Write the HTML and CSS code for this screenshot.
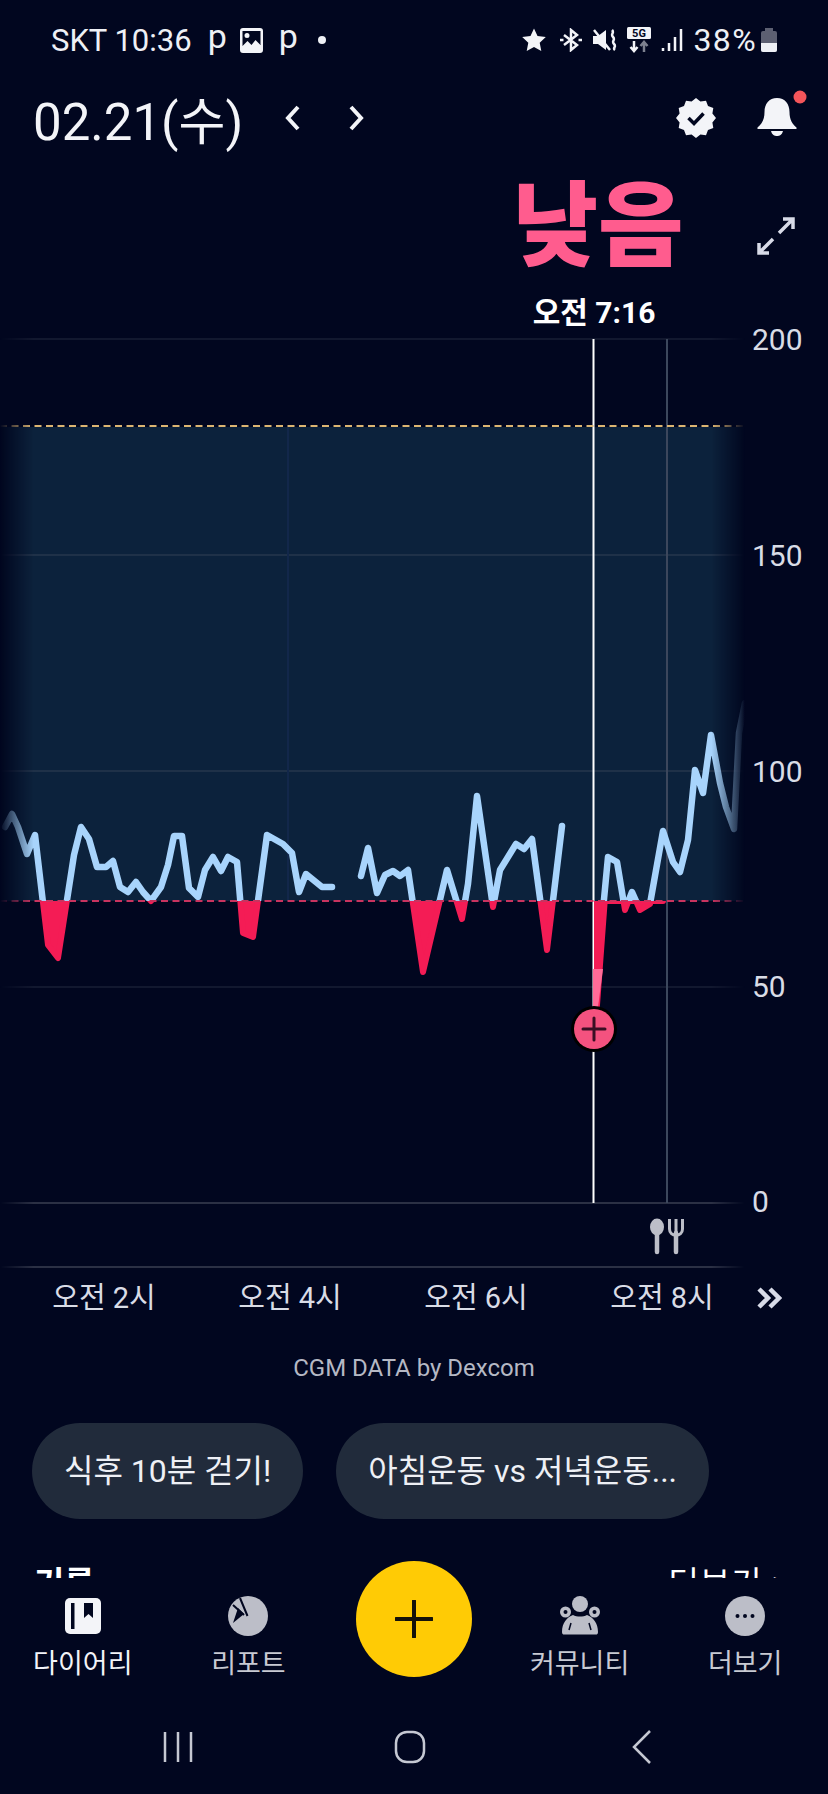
FILE: index.html
```html
<!DOCTYPE html>
<html lang="ko">
<head>
<meta charset="UTF-8">
<meta name="viewport" content="width=device-width, initial-scale=1.0">
<title>Diary</title>
<link rel="stylesheet" href="styles.css">
</head>
<body>
<div class="page">
  <div class="content">
    <div class="status-bar">
      <div class="status-left">
        <span class="carrier">SKT 10:36</span>
        <span class="status-p">p</span>
        <svg class="status-img" viewBox="0 0 23 25"><path class="ico-light" fill-rule="evenodd" d="M3 0h17a3 3 0 0 1 3 3v19a3 3 0 0 1-3 3H3a3 3 0 0 1-3-3V3a3 3 0 0 1 3-3zM2.500 3v15l5-5 4 4 4-5 5 5V3zM7 5a2.500 2.500 0 1 1 0 5 2.500 2.500 0 0 1 0-5z"/></svg>
        <span class="status-p">p</span>
        <span class="status-dot"></span>
      </div>
      <div class="status-right">
        <svg class="ico-24 star" viewBox="0 0 24 24"><path class="ico-light" d="M12 .5l3.500 7.600 8.300 1-6.100 5.700 1.600 8.200L12 18.900 4.700 23l1.600-8.200L.2 9.100l8.300-1z"/></svg>
        <svg class="ico-24" viewBox="0 0 24 24"><path class="ico-line" d="M5 7l13 10-6 5V2l6 5L5 17M1 12h3.500M19.500 12H23"/></svg>
        <svg class="ico-24" viewBox="0 0 24 24"><path class="ico-light" d="M0 8h5l8-6v20l-8-6H0z"/><path class="ico-line" d="M1 2l16 20M19 2c3 3-2 4 1 7s-2 4 1 7-2 4 1 6"/></svg>
        <svg class="ico-5g" viewBox="0 0 24 26"><rect class="ico-light" width="24" height="12" rx="1.500"/><text class="ico-5g-text" x="12" y="10">5G</text><path class="ico-line" d="M7 14v10M3.500 20L7 24l3.500-4"/><path class="ico-line dim" d="M17 25V15M13.500 19L17 15l3.500 4"/></svg>
        <svg class="ico-sig" viewBox="0 0 22 24"><path class="ico-line" d="M2 20v3M8 15v8M14 9v14M20 1v22"/></svg>
        <span class="battery-text">38%</span>
        <div class="battery"><div class="battery-fill"></div></div>
      </div>
    </div>

    <div class="date-bar">
      <h1 class="date-title">02.21(수)</h1>
      <svg class="date-arrow" viewBox="0 0 16 26"><path d="M13 2L3 13l10 11"/></svg>
      <svg class="date-arrow next" viewBox="0 0 16 26"><path d="M3 2l10 11L3 24"/></svg>
      <div class="date-actions">
        <svg class="ico-badge" viewBox="0 0 40 40"><polygon class="ico-light" points="40,20 36.400,24.400 37.300,30 32,32 30,37.300 24.400,36.400 20,40 15.600,36.400 10,37.300 8,32 2.700,30 3.600,24.400 0,20 3.600,15.600 2.700,10 8,8 10,2.700 15.600,3.600 20,0 24.400,3.600 30,2.700 32,8 37.300,10 36.400,15.600"/><path class="badge-check" d="M12.500 20l5.500 5.500 9.500-10"/></svg>
        <svg class="ico-bell" viewBox="0 0 52 46"><path class="ico-light" d="M20 5c-8 0-12.500 6-12.500 14 0 8-3 12-7 15.500V36h39v-1.500c-4-3.500-7-7.500-7-15.500 0-8-4.500-14-12.500-14z"/><path class="ico-light" d="M14 38h12c-1 4-3.500 5-6 5s-5-1-6-5z"/><circle class="bell-dot" cx="43" cy="4" r="6.500"/></svg>
      </div>
    </div>

    <div class="reading">
      <div class="reading-level">낮음</div>
      <div class="reading-time">오전 7:16</div>
      <svg class="ico-expand" viewBox="0 0 38 38"><path d="M36 2L22 16M26 2h10v10M2 36l14-14M2 26v10h10"/></svg>
    </div>

    <svg class="chart" viewBox="0 330 828 940">
      <defs>
        <linearGradient id="edgeFade" gradientUnits="userSpaceOnUse" x1="0" y1="0" x2="745" y2="0">
          <stop offset="0" stop-color="#000"/>
          <stop offset="0.045" stop-color="#fff"/>
          <stop offset="0.955" stop-color="#fff"/>
          <stop offset="1" stop-color="#000"/>
        </linearGradient>
        <mask id="edgeMask" maskUnits="userSpaceOnUse" x="0" y="330" width="828" height="940">
          <rect x="0" y="330" width="828" height="940" fill="url(#edgeFade)"/>
        </mask>
        <clipPath id="aboveLow"><rect x="0" y="330" width="828" height="571"/></clipPath>
        <clipPath id="belowLow"><rect x="0" y="901" width="828" height="300"/></clipPath>
        <path id="seg1" d="M5 827L12 814L18 827L27 854L35 835L48 945L58 958L74 855L81 827L89 839L97 867L106 867L113 861L120 887L128 892L136 882L143 892L151 901L161 887L168 865L174 836L182 836L189 888L198 897L205 870L213 857L221 871L228 857L237 862L243 933L253 937L267 835L283 844L292 853L299 892L306 874L322 887L332 887"/>
        <path id="seg2" d="M361 876L368 848L377 893L385 875L393 871L400 876L408 870L423 972L447 870L462 919L468 884L477 796L493 907L500 870L516 844L524 849L532 839L547 950L562 826"/>
        <path id="seg3" d="M594 1005L608 857L617 862L625 910L632 892L640 910L650 904L663 831L673 862L680 872L688 840L695 770L703 793L711 735L720 783L726 807L734 829L739 733L745 703"/>
      </defs>

      <g mask="url(#edgeMask)">
        <rect class="band" x="0" y="427" width="745" height="474"/>
        <line class="grid dim" x1="0" y1="339" x2="745" y2="339"/>
        <line class="grid" x1="0" y1="555" x2="745" y2="555"/>
        <line class="grid" x1="0" y1="771" x2="745" y2="771"/>
        <line class="grid dim" x1="0" y1="987" x2="745" y2="987"/>
        <line class="grid strong" x1="0" y1="1203" x2="745" y2="1203"/>
        <line class="grid strong" x1="0" y1="1267" x2="745" y2="1267"/>
      </g>
      <line class="grid-v faint" x1="288" y1="427" x2="288" y2="901"/>
      <line class="grid-v" x1="667" y1="339" x2="667" y2="1203"/>
      <line class="cursor" x1="593.500" y1="339" x2="593.500" y2="1203"/>

      <g clip-path="url(#belowLow)" class="low">
        <use href="#seg1"/><use href="#seg2"/>
        <path d="M597 1005L608 857L617 862L625 910L632 892L640 910L650 904L663 831L663 901L597 901Z"/>
      </g>
      <path class="urgent" d="M593 969H603L598 1007H593Z"/>
      <g mask="url(#edgeMask)">
        <g clip-path="url(#aboveLow)" class="glucose">
          <use href="#seg1"/><use href="#seg2"/><use href="#seg3"/>
        </g>
        <line class="limit-high" x1="0" y1="426" x2="745" y2="426"/>
        <line class="limit-low" x1="0" y1="901" x2="745" y2="901"/>
      </g>

      <circle class="marker-ring" cx="594" cy="1029" r="23"/>
      <circle class="marker" cx="594" cy="1029" r="20"/>
      <path class="marker-plus" d="M583 1029h22M594 1018v22"/>

      <text class="axis" x="752" y="350">200</text>
      <text class="axis" x="752" y="566">150</text>
      <text class="axis" x="752" y="782">100</text>
      <text class="axis" x="752" y="997">50</text>
      <text class="axis" x="752" y="1212">0</text>

      <ellipse class="meal" cx="657" cy="1227" rx="7" ry="8.500"/>
      <path class="meal-line" d="M657 1230v22M676 1233v19"/>
      <path class="meal-thin" d="M669.500 1219v10c0 4 3 6 6.500 6s6.500-2 6.500-6v-10M676 1219v14"/>
    </svg>

    <div class="x-labels">
      <span class="x-label">오전 2시</span>
      <span class="x-label">오전 4시</span>
      <span class="x-label">오전 6시</span>
      <span class="x-label">오전 8시</span>
      <svg class="ico-more" viewBox="0 0 26 22"><path d="M3 2l9 9-9 9M14 2l9 9-9 9"/></svg>
    </div>

    <div class="credit">CGM DATA by Dexcom</div>

    <div class="chips">
      <div class="chip">식후 10분 걷기!</div>
      <div class="chip">아침운동 vs 저녁운동...</div>
    </div>

    <div class="list-head">
      <span class="list-title">기록</span>
      <span class="list-link">더보기 &gt;</span>
    </div>
  </div>

  <div class="tab-bar">
    <div class="tab active">
      <svg class="tab-icon" viewBox="0 0 40 40"><rect class="ico-light" x="2" y="2" width="36" height="36" rx="5"/><rect class="ico-cut" x="8" y="7" width="3.500" height="26"/><path class="ico-cut" d="M21 7h9v15l-4.500-4-4.500 4z"/></svg>
      <span class="tab-label">다이어리</span>
    </div>
    <div class="tab">
      <svg class="tab-icon" viewBox="0 0 40 40"><circle class="ico-grey" cx="20" cy="20" r="20"/><path class="ico-cut" d="M5 27l11-9-6-6z"/><path class="cut-line" d="M5 9l11 10M12 2l7.500 18"/></svg>
      <span class="tab-label">리포트</span>
    </div>
    <div class="tab">
      <div class="fab">
        <svg class="fab-plus" viewBox="0 0 38 38"><path d="M19 1v36M1 19h36"/></svg>
      </div>
    </div>
    <div class="tab">
      <svg class="tab-icon" viewBox="0 0 40 40"><circle class="ico-grey" cx="20" cy="8" r="8"/><circle class="ico-grey" cx="5.500" cy="16" r="5.500"/><circle class="ico-grey" cx="34.500" cy="16" r="5.500"/><circle class="ico-cut" cx="5.500" cy="16" r="2"/><circle class="ico-cut" cx="34.500" cy="16" r="2"/><path class="ico-grey" d="M2 36c0-9 5-15 11-17 4 2 10 2 14 0 6 2 11 8 11 17 0 2-1 2.500-2 2.500H4c-1 0-2-.5-2-2.500z"/><path class="cut-thin" d="M9 34l2-7M31 34l-2-7"/></svg>
      <span class="tab-label">커뮤니티</span>
    </div>
    <div class="tab">
      <svg class="tab-icon" viewBox="0 0 40 40"><circle class="ico-grey" cx="20" cy="20" r="20"/><circle class="ico-cut" cx="12.500" cy="20" r="2"/><circle class="ico-cut" cx="20" cy="20" r="2"/><circle class="ico-cut" cx="27.500" cy="20" r="2"/></svg>
      <span class="tab-label">더보기</span>
    </div>
  </div>

  <div class="sys-nav">
    <div class="sys-item"><svg class="sys-icon" viewBox="0 0 34 34"><path d="M4 2v30M17 2v30M30 2v30"/></svg></div>
    <div class="sys-item"><svg class="sys-icon" viewBox="0 0 34 34"><rect x="3" y="2" width="28" height="30" rx="11"/></svg></div>
    <div class="sys-item"><svg class="sys-icon" viewBox="0 0 34 34"><path d="M25 1L9 17l16 16"/></svg></div>
  </div>
</div>
</body>
</html>
```

FILE: styles.css
```css
* {
  box-sizing: border-box;
}
body {
  margin: 0;
  padding: 0;
  background-color: #01061f;
  font-family: Roboto, "Noto Sans CJK KR", sans-serif;
  color: #d9dce6;
}
.page {
  width: 828px;
  height: 1794px;
  overflow: hidden;
}
.content {
  height: 1578px;
  overflow: hidden;
}

/* status bar */
.status-bar {
  height: 80px;
  padding: 0 51px;
  display: flex;
  align-items: center;
  justify-content: space-between;
  color: #eef0f5;
}
.status-left, .status-right {
  display: flex;
  align-items: center;
}
.carrier {
  font-size: 31px;
}
.status-p {
  font-size: 34px;
  line-height: 34px;
  margin: -8px 0 0 16px;
}
.status-img {
  width: 23px;
  height: 25px;
  margin-left: 13px;
}
.status-dot {
  width: 8px;
  height: 8px;
  border-radius: 50%;
  background-color: #eef0f5;
  margin-left: 20px;
}
.status-right {
  gap: 10px;
}
.ico-24 {
  width: 24px;
  height: 24px;
}
.ico-24.star {
  margin-right: 3px;
}
.ico-5g {
  width: 24px;
  height: 26px;
}
.ico-5g-text {
  font-size: 11px;
  font-weight: 700;
  text-anchor: middle;
  fill: #01061f;
}
.ico-sig {
  width: 22px;
  height: 24px;
}
.ico-light {
  fill: #f3f4f8;
}
.ico-grey {
  fill: #bcbec8;
}
.ico-cut {
  fill: #01061f;
}
.cut-line, .cut-thin {
  fill: none;
  stroke: #01061f;
  stroke-width: 2;
}
.cut-thin {
  stroke-width: 1.5;
}
.ico-line {
  fill: none;
  stroke: #f3f4f8;
  stroke-width: 2.5;
}
.ico-line.dim {
  stroke: #7d818f;
}
.battery-text {
  font-size: 32px;
  letter-spacing: 1.4px;
  margin-right: -6px;
}
.battery {
  width: 16px;
  height: 21px;
  margin-top: 3px;
  border-radius: 2px;
  background-color: #5d6072;
  display: flex;
  align-items: flex-end;
  position: relative;
}
.battery::before {
  content: "";
  position: absolute;
  top: -3px;
  left: 4px;
  width: 8px;
  height: 3px;
  background-color: #5d6072;
}
.battery-fill {
  width: 100%;
  height: 9px;
  border-radius: 0 0 2px 2px;
  background-color: #eef0f5;
}

/* date row */
.date-bar {
  height: 76px;
  padding-left: 33px;
  display: flex;
  align-items: center;
}
.date-title {
  margin: 0;
  font-size: 51px;
  font-weight: 400;
  color: #f3f4f8;
}
.date-arrow {
  width: 16px;
  height: 26px;
  margin-left: 42px;
  fill: none;
  stroke: #f3f4f8;
  stroke-width: 4;
}
.date-arrow.next {
  margin-left: 47px;
}
.date-actions {
  margin-left: auto;
  display: flex;
  align-items: center;
}
.ico-badge {
  width: 40px;
  height: 40px;
}
.badge-check {
  fill: none;
  stroke: #01061f;
  stroke-width: 3.5;
}
.ico-bell {
  width: 52px;
  height: 46px;
  margin: -4px 19px 0 41px;
  overflow: visible;
}
.bell-dot {
  fill: #f4555a;
}

/* current reading */
.reading {
  height: 174px;
  padding: 4px 0 0 360px;
  position: relative;
  text-align: center;
}
.reading-level {
  line-height: 135px;
  margin-left: 8px;
  font-size: 93px;
  font-weight: 900;
  color: #ff5c8e;
}
.reading-time {
  line-height: 35px;
  font-size: 30px;
  font-weight: 700;
  color: #fff;
}
.ico-expand {
  position: absolute;
  top: 61px;
  right: 33px;
  width: 38px;
  height: 38px;
  fill: none;
  stroke: #d8dbe8;
  stroke-width: 3.5;
}

/* chart */
.chart {
  display: block;
  width: 828px;
  height: 940px;
  overflow: visible;
}
.band {
  fill: #0c223c;
}
.grid {
  stroke: #1f3148;
  stroke-width: 2;
}
.grid.dim {
  stroke: #12182f;
}
.grid.strong {
  stroke: #2b3044;
}
.grid-v {
  stroke: #3c475c;
  stroke-width: 2;
}
.grid-v.faint {
  stroke: #12274a;
}
.cursor {
  stroke: #fff;
  stroke-width: 2;
}
.low {
  fill: #f41c55;
  stroke: #f41c55;
  stroke-width: 6;
  stroke-linejoin: round;
}
.urgent {
  fill: #ff6b98;
}
.glucose {
  fill: none;
  stroke: #a8d4fc;
  stroke-width: 6.5;
  stroke-linejoin: round;
  stroke-linecap: round;
}
.limit-high {
  stroke: #dcb572;
  stroke-width: 2;
  stroke-dasharray: 7 4.500;
}
.limit-low {
  stroke: #c9335f;
  stroke-width: 2;
  stroke-dasharray: 7 4.500;
}
.marker-ring {
  fill: #000;
}
.marker {
  fill: #f4527f;
}
.marker-plus {
  fill: none;
  stroke: #3a0f24;
  stroke-width: 3;
  stroke-linecap: round;
}
.axis {
  font-size: 30px;
  fill: #d9dce6;
}
.meal {
  fill: #bcbec8;
}
.meal-line {
  fill: none;
  stroke: #bcbec8;
  stroke-width: 4.5;
  stroke-linecap: round;
}
.meal-thin {
  fill: none;
  stroke: #bcbec8;
  stroke-width: 3;
}

/* x axis */
.x-labels {
  height: 50px;
  padding-left: 11px;
  display: flex;
  align-items: center;
}
.x-label {
  width: 186px;
  text-align: center;
  font-size: 29px;
  color: #d9dce6;
}
.ico-more {
  width: 26px;
  height: 22px;
  margin: 6px 0 0 1px;
  fill: none;
  stroke: #d8dbe8;
  stroke-width: 4.5;
}
.credit {
  margin-top: 30px;
  line-height: 36px;
  text-align: center;
  font-size: 24px;
  color: #b5b8c4;
}

/* chips */
.chips {
  margin-top: 37px;
  padding-left: 32px;
  display: flex;
  gap: 33px;
}
.chip {
  height: 96px;
  line-height: 96px;
  padding: 0 32px;
  border-radius: 48px;
  background-color: #212b3b;
  font-size: 32px;
  color: #eef0f5;
}
.list-head {
  margin-top: 45px;
  padding: 0 38px 0 34px;
  display: flex;
  justify-content: space-between;
  line-height: 40px;
  font-size: 33px;
  color: #fff;
}
.list-title {
  font-weight: 700;
}
.list-link {
  letter-spacing: 1px;
}

/* bottom tabs */
.tab-bar {
  height: 122px;
  display: grid;
  grid-template-columns: repeat(5, 1fr);
}
.tab {
  padding-top: 18px;
  display: flex;
  flex-direction: column;
  align-items: center;
}
.tab-icon {
  width: 40px;
  height: 40px;
}
.tab-label {
  margin-top: 10px;
  line-height: 36px;
  font-size: 27px;
  color: #c8cad3;
}
.tab.active .tab-label {
  color: #f3f4f8;
}
.fab {
  width: 116px;
  height: 116px;
  margin-top: -35px;
  border-radius: 50%;
  background-color: #ffcb05;
  display: flex;
  align-items: center;
  justify-content: center;
  flex-shrink: 0;
}
.fab-plus {
  width: 38px;
  height: 38px;
  fill: none;
  stroke: #14120a;
  stroke-width: 4;
  stroke-linecap: round;
}

/* android nav */
.sys-nav {
  height: 94px;
  padding: 0 8px 0 0;
  display: flex;
  justify-content: center;
}
.sys-item {
  width: 232px;
  padding-top: 30px;
  display: flex;
  justify-content: center;
}
.sys-icon {
  width: 34px;
  height: 34px;
  fill: none;
  stroke: #c5c8d2;
  stroke-width: 2.5;
}
```
